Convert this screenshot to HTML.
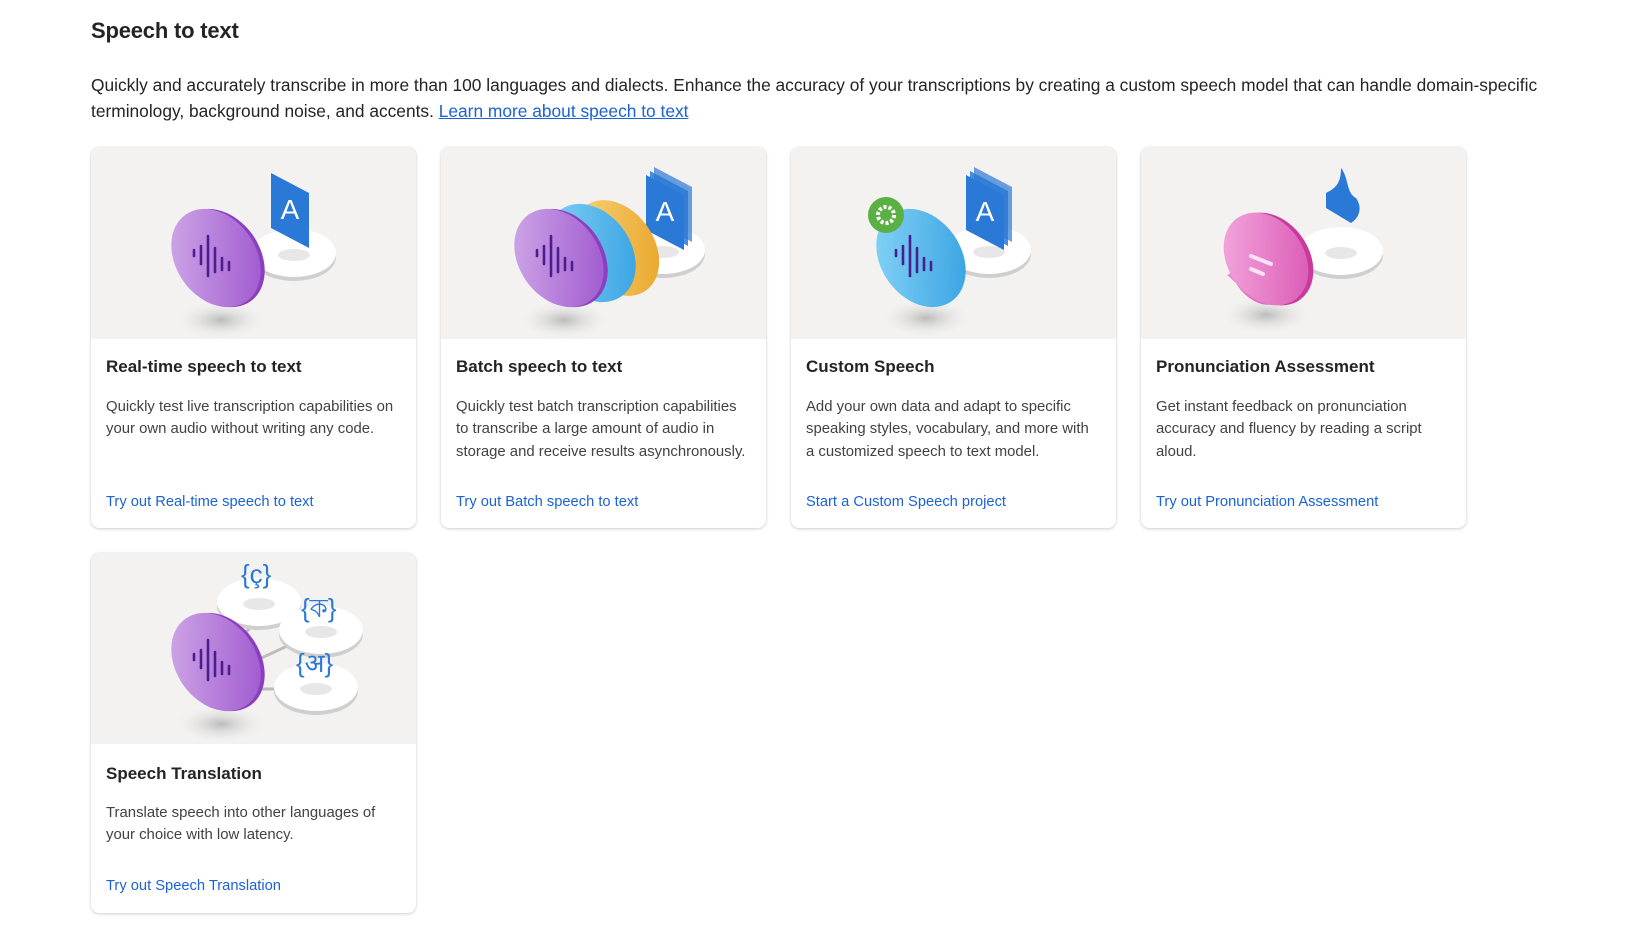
<!DOCTYPE html>
<html><head><meta charset="utf-8"><style>
*{box-sizing:border-box;margin:0;padding:0}
body{width:1631px;height:929px;background:#fff;font-family:"Liberation Sans",sans-serif;color:#242424;position:relative;overflow:hidden}
h1{position:absolute;left:91px;top:18px;font-size:22px;font-weight:600;letter-spacing:-0.2px}
p.intro{position:absolute;left:91px;top:72px;width:1520px;font-size:17.35px;line-height:26px}
p.intro a{color:#1a62d6;text-decoration:underline}
.card{position:absolute;width:325px;height:381px;background:#fff;border-radius:8px;box-shadow:0 1px 3px rgba(0,0,0,.18),0 0 1px rgba(0,0,0,.12);overflow:hidden}
.img{height:192px;background:#f3f2f1;position:relative}
.img svg{position:absolute;left:0;top:0}
.t{position:absolute;left:15px;top:210px;font-size:17px;font-weight:600}
.d{position:absolute;left:15px;top:249px;width:292px;font-size:14.9px;line-height:22.4px;color:#424242}
.l{position:absolute;left:15px;top:347px;font-size:14.7px;color:#1a62d6}
</style></head><body>
<svg width="0" height="0" style="position:absolute"><defs>
<linearGradient id="pu" x1="0" y1="0" x2="1" y2="1"><stop offset="0" stop-color="#d4b0ea"/><stop offset="1" stop-color="#9a4fcc"/></linearGradient>
<linearGradient id="bl" x1="0" y1="0" x2="1" y2="1"><stop offset="0" stop-color="#8dd8f8"/><stop offset="1" stop-color="#2f9de0"/></linearGradient>
<linearGradient id="or" x1="0" y1="0" x2="1" y2="1"><stop offset="0" stop-color="#f8dc8a"/><stop offset="1" stop-color="#e8a020"/></linearGradient>
<linearGradient id="pk" x1="0" y1="0" x2="1" y2="1"><stop offset="0" stop-color="#f6b0e2"/><stop offset="1" stop-color="#d850b0"/></linearGradient>
<radialGradient id="sh"><stop offset="0" stop-color="#bbb"/><stop offset="1" stop-color="#f3f2f1" stop-opacity="0"/></radialGradient>
<g id="plate"><ellipse cx="0" cy="4" rx="42" ry="24" fill="#cfcfcf"/><ellipse cx="0" cy="0" rx="42" ry="24" fill="#fff"/><ellipse cx="0" cy="2" rx="16" ry="6" fill="#ddd" opacity=".7"/></g>
<g id="wave" stroke="#4a1e90" stroke-width="2.6" stroke-linecap="round"><line x1="-22" y1="-8" x2="-22" y2="-2"/><line x1="-15" y1="-12" x2="-15" y2="6"/><line x1="-8" y1="-22" x2="-8" y2="18"/><line x1="-1" y1="-10" x2="-1" y2="14"/><line x1="6" y1="0" x2="6" y2="12"/><line x1="13" y1="4" x2="13" y2="12"/></g>
<g id="disc"><ellipse cx="5" cy="62" rx="48" ry="20" fill="url(#sh)"/><ellipse cx="4" cy="0" rx="40" ry="53" transform="rotate(-35 4 0)" fill="#8a3fc0"/><ellipse cx="0" cy="0" rx="40" ry="53" transform="rotate(-35)" fill="url(#pu)"/><use href="#wave"/></g>
<g id="acard"><path d="M0 0 L38 20 L38 75 L0 55Z" fill="#2b79d6"/><text x="19" y="46" font-size="28" fill="#fff" text-anchor="middle" font-family="Liberation Sans">A</text></g>
</defs></svg>

<h1>Speech to text</h1>
<p class="intro">Quickly and accurately transcribe in more than 100 languages and dialects. Enhance the accuracy of your transcriptions by creating a custom speech model that can handle domain-specific terminology, background noise, and accents. <a>Learn more about speech to text</a></p>

<div class="card" style="left:91px;top:147px"><div class="img"><svg width="325" height="192"><g transform="translate(0,6)">
<use href="#plate" x="203" y="100"/><use href="#acard" x="180" y="20"/><use href="#disc" x="125" y="105"/></g></svg></div>
<div class="t">Real-time speech to text</div><div class="d">Quickly test live transcription capabilities on your own audio without writing any code.</div><div class="l">Try out Real-time speech to text</div></div>

<div class="card" style="left:441px;top:147px"><div class="img"><svg width="325" height="192"><g transform="translate(0,6)">
<use href="#plate" x="222" y="97"/><g transform="translate(205,22)"><path d="M8 -8 L46 12 L46 67 L8 47Z" fill="#2b79d6" opacity=".7"/><path d="M4 -4 L42 16 L42 71 L4 51Z" fill="#2b79d6" opacity=".85"/><use href="#acard"/></g>
<ellipse cx="175" cy="95" rx="38" ry="52" transform="rotate(-35 175 95)" fill="url(#or)"/><ellipse cx="150" cy="100" rx="40" ry="53" transform="rotate(-35 150 100)" fill="url(#bl)"/><use href="#disc" x="118" y="105"/></g></svg></div>
<div class="t">Batch speech to text</div><div class="d">Quickly test batch transcription capabilities to transcribe a large amount of audio in storage and receive results asynchronously.</div><div class="l">Try out Batch speech to text</div></div>

<div class="card" style="left:791px;top:147px"><div class="img"><svg width="325" height="192"><g transform="translate(0,6)">
<use href="#plate" x="198" y="97"/><g transform="translate(175,22)"><path d="M8 -8 L46 12 L46 67 L8 47Z" fill="#2b79d6" opacity=".7"/><path d="M4 -4 L42 16 L42 71 L4 51Z" fill="#2b79d6" opacity=".85"/><use href="#acard"/></g>
<ellipse cx="135" cy="165" rx="48" ry="20" fill="url(#sh)"/><ellipse cx="130" cy="105" rx="40" ry="53" transform="rotate(-35 130 105)" fill="url(#bl)"/><use href="#wave" x="127" y="105"/>
<circle cx="95" cy="62" r="18" fill="#5bb044"/><circle cx="95" cy="62" r="8" fill="none" stroke="#fff" stroke-width="4" stroke-dasharray="3 2"/></g></svg></div>
<div class="t">Custom Speech</div><div class="d">Add your own data and adapt to specific speaking styles, vocabulary, and more with a customized speech to text model.</div><div class="l">Start a Custom Speech project</div></div>

<div class="card" style="left:1141px;top:147px"><div class="img"><svg width="325" height="192"><g transform="translate(0,6)">
<use href="#plate" x="200" y="98"/><path d="M185 40 C195 35 200 30 200 15 C208 25 205 40 215 45 C222 55 218 65 210 70 L185 55 Z" fill="#2b79d6"/>
<ellipse cx="125" cy="162" rx="48" ry="20" fill="url(#sh)"/><ellipse cx="130" cy="106" rx="38" ry="50" transform="rotate(-35 130 106)" fill="#c93a9c"/><path d="M90 120 C80 80 105 55 125 70 C160 85 160 130 140 148 C120 160 100 140 95 130 L86 122Z" fill="url(#pk)"/><ellipse cx="125" cy="106" rx="38" ry="50" transform="rotate(-35 125 106)" fill="url(#pk)"/>
<g stroke="#fde0f4" stroke-width="4" stroke-linecap="round"><line x1="110" y1="103" x2="130" y2="111"/><line x1="110" y1="116" x2="122" y2="121"/></g></g></svg></div>
<div class="t">Pronunciation Assessment</div><div class="d">Get instant feedback on pronunciation accuracy and fluency by reading a script aloud.</div><div class="l">Try out Pronunciation Assessment</div></div>

<div class="card" style="left:91px;top:553px;height:360px"><div class="img" style="height:191px"><svg width="325" height="191"><g transform="translate(0,4)">
<g stroke="#bdbdbd" stroke-width="3"><line x1="140" y1="90" x2="170" y2="60"/><line x1="140" y1="115" x2="205" y2="85"/><line x1="140" y1="132" x2="210" y2="132"/></g>
<use href="#plate" x="168" y="45"/><use href="#plate" x="230" y="73"/><use href="#plate" x="225" y="130"/>
<g fill="#2b79d6" font-family="Liberation Sans,Noto Sans CJK JP,sans-serif" font-size="26"><text x="150" y="26">{ç}</text><text x="210" y="60">{ক}</text><text x="205" y="115">{अ}</text></g>
<use href="#disc" x="125" y="105"/></g></svg></div>
<div class="t" style="top:211px">Speech Translation</div><div class="d" style="top:249px">Translate speech into other languages of your choice with low latency.</div><div class="l" style="top:325px">Try out Speech Translation</div></div>
</body></html>
